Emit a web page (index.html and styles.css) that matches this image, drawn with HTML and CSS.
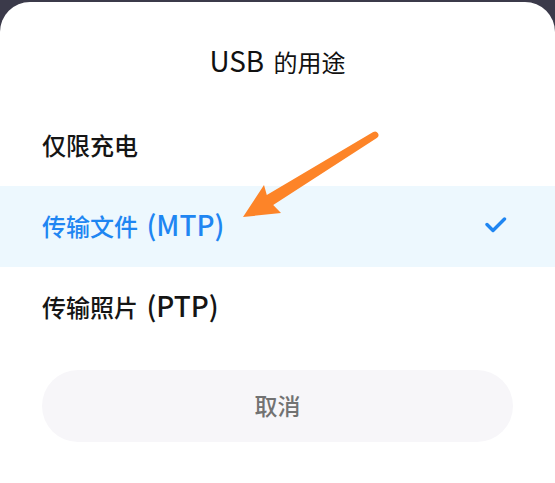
FILE: index.html
```html
<!DOCTYPE html>
<html lang="zh-CN">
<head>
    <meta charset="UTF-8">
    <meta name="viewport" content="width=device-width, initial-scale=1.0">
    <title>USB 的用途</title>
    <link rel="stylesheet" href="styles.css">
</head>
<body>
    <div class="sheet">
        <h1 class="sheet-title"><span class="latin">USB</span> 的用途</h1>
        <ul class="options">
            <li class="option"><span>仅限充电</span></li>
            <li class="option selected">
                <span>传输文件 <span class="latin">(MTP)</span></span>
                <svg class="check" width="22" height="20" viewBox="0 0 22 20">
                    <path d="M2 9.5 L8 15.5 L19.5 4" fill="none" stroke="#1f86f2" stroke-width="3.4" stroke-linecap="round" stroke-linejoin="round"/>
                </svg>
            </li>
            <li class="option"><span>传输照片 <span class="latin">(PTP)</span></span></li>
        </ul>
        <div class="actions">
            <button class="cancel-btn">取消</button>
        </div>

        <!-- annotation arrow drawn over the list -->
        <svg class="pointer" width="555" height="483" viewBox="0 0 555 483">
            <path d="M373.2 132 L266.8 194.9 L264 185 L243 217 L281 213 L273.2 205.1 L376.8 138 A3.5 3.5 0 0 0 373.2 132 Z" fill="#fd8428"/>
        </svg>
    </div>
</body>
</html>
```

FILE: styles.css
```css
body {
    margin: 0;
    background: #3b3a4a;
    font-family: 'Noto Sans CJK SC', 'Noto Sans', sans-serif;
    height: 483px;
    overflow: hidden;
}

.sheet {
    position: relative;
    margin-top: 2px;
    height: 481px;
    background: #ffffff;
    border-radius: 30px 30px 0 0;
    padding-top: 42px;
    box-sizing: border-box;
}

.sheet-title {
    margin: 0;
    height: 61px;
    line-height: 36px;
    text-align: center;
    font-size: 24px;
    font-weight: 400;
    color: #111111;
}

.latin {
    font-size: 1.16em;
    line-height: 1;
}

.sheet-title .latin {
    margin-right: 4px;
}

.option .latin {
    margin-left: 3px;
}

.options {
    list-style: none;
    margin: 0;
    padding: 0;
}

.option {
    height: 81px;
    display: flex;
    align-items: center;
    justify-content: space-between;
    padding: 0 48px 3px 42px;
    box-sizing: border-box;
    font-size: 24px;
    font-weight: 500;
    color: #151515;
}

.option.selected {
    background: #edf8fe;
    color: #1f86f2;
}

.check {
    display: block;
}

.actions {
    padding: 22px 42px 0;
}

.cancel-btn {
    display: block;
    width: 100%;
    height: 72px;
    padding: 0 0 3px;
    border: none;
    border-radius: 36px;
    background: #f7f6f9;
    color: #727272;
    font-family: inherit;
    font-size: 23px;
    font-weight: 500;
}

.pointer {
    position: absolute;
    top: -2px;
    left: 0;
    pointer-events: none;
}
```
